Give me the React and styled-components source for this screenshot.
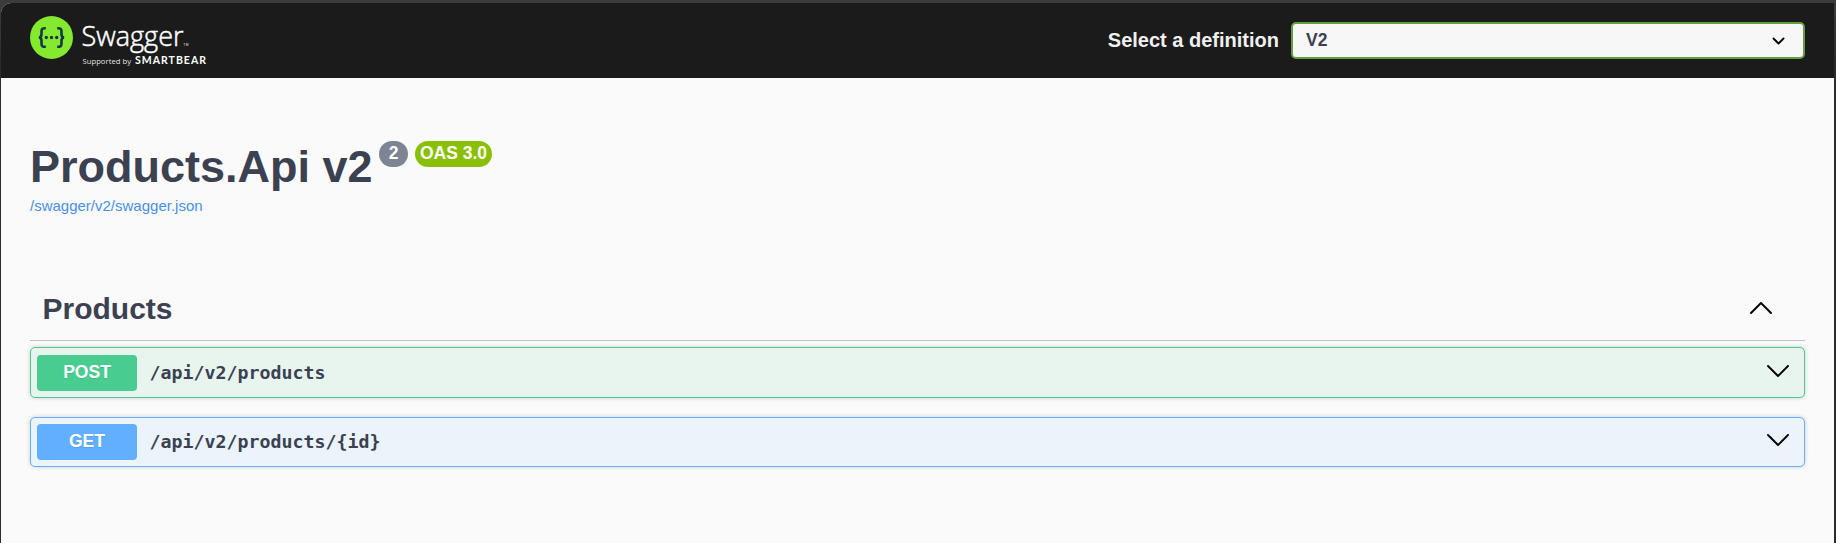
import React from "react";
import styled, { createGlobalStyle } from "styled-components";

const GlobalStyle = createGlobalStyle`
  * { box-sizing: border-box; }
  body {
    margin: 0;
    background: #2b2b2b;
    color: #3b4151;
    font-family: Arial, "Liberation Sans", sans-serif;
    overflow: hidden;
  }
`;

const Frame = styled.div`
  height: 543px;
  padding: 3px 2px 0 1px;
  background: linear-gradient(#3b3b3b 0, #3b3b3b 14px, #2b2b2b 60px);
`;

const Page = styled.div`
  height: 540px;
  background: #fafafa;
  border-radius: 10px 0 0 0;
  overflow: hidden;
`;

const Topbar = styled.header`
  height: 75px;
  padding: 0 29px;
  display: flex;
  justify-content: space-between;
  background: #1b1b1b;
`;

const Logo = styled.svg`
  display: block;
  width: 190px;
  height: 75px;
`;

const Definition = styled.label`
  display: flex;
  align-items: center;
  height: 37px;
  margin-top: 19px;
  color: #f0f0f0;
  font-size: 20px;
  font-weight: 700;
`;

const SelectBox = styled.div`
  display: flex;
  align-items: center;
  justify-content: space-between;
  width: 514px;
  height: 37px;
  margin-left: 12px;
  padding: 0 18px 0 13px;
  border: 2px solid #62a03f;
  border-radius: 5px;
  background: #f7f7f7;
  color: #3b4151;
  font-size: 17.5px;
`;

const Content = styled.main`
  padding: 63px 29px 0;
`;

const Info = styled.section`
  height: 129px;
`;

const TitleRow = styled.div`
  display: flex;
  align-items: flex-start;
`;

const Title = styled.h2`
  margin: 0;
  font-size: 45px;
  line-height: 52px;
  white-space: nowrap;
  width: 349px;
`;

const Badge = styled.span`
  height: 26px;
  width: ${(p) => p.$width}px;
  margin-right: 7px;
  border-radius: 13px;
  background: ${(p) => p.$color};
  color: #fff;
  font-size: 17.5px;
  font-weight: 700;
  line-height: 24px;
  text-align: center;
  white-space: nowrap;
`;

const SpecLink = styled.a`
  display: block;
  margin-top: 4px;
  color: #4990e2;
  font-size: 15px;
  line-height: 18px;
`;

const TagHeader = styled.h3`
  display: flex;
  align-items: center;
  justify-content: space-between;
  height: 71px;
  margin: 0 0 6px;
  padding: 7px 33px 0 12.5px;
  border-bottom: 1px solid rgba(59, 65, 81, 0.3);
  font-size: 30px;
  line-height: 36px;
`;

const Operation = styled.div`
  display: flex;
  align-items: center;
  height: ${(p) => p.$height}px;
  margin-bottom: 19px;
  padding: 0 15px 0 6px;
  border: 1px solid ${(p) => p.$color};
  border-radius: 5px;
  background: ${(p) => p.$tint};
  box-shadow: 0 0 4px rgba(0, 0, 0, 0.19);
`;

const Method = styled.span`
  width: 100px;
  height: 36px;
  border-radius: 4px;
  background: ${(p) => p.$color};
  color: #fff;
  font-size: 17.5px;
  font-weight: 700;
  line-height: 34px;
  text-align: center;
  text-shadow: 0 1px 0 rgba(0, 0, 0, 0.1);
`;

const Path = styled.span`
  flex: 1;
  padding-left: 12.5px;
  font-family: Consolas, "DejaVu Sans Mono", monospace;
  font-size: 18.27px;
  font-weight: 700;
  line-height: 24px;
`;

const Chevron = styled.svg`
  display: block;
  flex: none;
  margin-top: ${(p) => p.$shift || 0}px;
  fill: none;
  stroke: #000;
  stroke-linecap: round;
  stroke-linejoin: round;
`;

function SwaggerLogo() {
  return (
    <Logo viewBox="30 3 190 75">
      <circle cx="51.5" cy="37.5" r="21.5" fill="#85ea2d" />
      <g fill="none" stroke="#173647" strokeWidth="2.6">
        <path d="M45.8 28.2c-3.3-.2-4.3.7-4.3 3.4v2.6c0 2.2-.8 3.3-2.7 3.3 1.9 0 2.7 1.1 2.7 3.3v2.6c0 2.7 1 3.6 4.3 3.4" />
        <path d="M57.2 28.2c3.3-.2 4.3.7 4.3 3.4v2.6c0 2.2.8 3.3 2.7 3.3-1.9 0-2.7 1.1-2.7 3.3v2.6c0 2.7-1 3.6-4.3 3.4" />
      </g>
      <g fill="#173647">
        <circle cx="46.3" cy="37.5" r="1.65" />
        <circle cx="51.5" cy="37.5" r="1.65" />
        <circle cx="56.7" cy="37.5" r="1.65" />
      </g>
      <g fill="#fff" fontFamily="'Open Sans', sans-serif">
        <text x="81.5" y="46" fontSize="27" fontWeight="300" stroke="#fff" strokeWidth=".5" textLength="102" lengthAdjust="spacingAndGlyphs">Swagger</text>
        <text x="183.5" y="46" fontSize="3" textLength="5">TM</text>
        <text x="82.5" y="64" fontSize="7.7" textLength="48.5" fillOpacity=".9">Supported by</text>
        <text x="135" y="64" fontSize="10.5" fontWeight="700" fontFamily="Lato, sans-serif" textLength="71" lengthAdjust="spacing">SMARTBEAR</text>
      </g>
    </Logo>
  );
}

function Arrow({ up, shift }) {
  return (
    <Chevron width="22" height="12" viewBox="0 0 22 12" strokeWidth="1.9" $shift={shift}>
      <path d={up ? "M1 11L11 1L21 11" : "M1 1L11 11L21 1"} />
    </Chevron>
  );
}

const operations = [
  { method: "POST", path: "/api/v2/products", color: "#49cc90", tint: "#e7f5ee", height: 51, shift: -3 },
  { method: "GET", path: "/api/v2/products/{id}", color: "#61affe", tint: "#ebf3fb", height: 50, shift: -4 },
];

export default function App() {
  return (
    <>
      <GlobalStyle />
      <Frame>
        <Page>
          <Topbar>
            <SwaggerLogo />
            <Definition>
              Select a definition
              <SelectBox>
                V2
                <Chevron width="13" height="8" viewBox="0 0 13 8" strokeWidth="1.9">
                  <path d="M1.5 1.5L6.5 6.5L11.5 1.5" />
                </Chevron>
              </SelectBox>
            </Definition>
          </Topbar>
          <Content>
            <Info>
              <TitleRow>
                <Title>Products.Api v2</Title>
                <Badge $width={29} $color="#7d8492">2</Badge>
                <Badge $width={77} $color="#89bf04">OAS 3.0</Badge>
              </TitleRow>
              <SpecLink>/swagger/v2/swagger.json</SpecLink>
            </Info>
            <TagHeader>
              Products
              <Arrow up shift={-2} />
            </TagHeader>
            {operations.map((op) => (
              <Operation key={op.method} $color={op.color} $tint={op.tint} $height={op.height}>
                <Method $color={op.color}>{op.method}</Method>
                <Path>{op.path}</Path>
                <Arrow shift={op.shift} />
              </Operation>
            ))}
          </Content>
        </Page>
      </Frame>
    </>
  );
}
